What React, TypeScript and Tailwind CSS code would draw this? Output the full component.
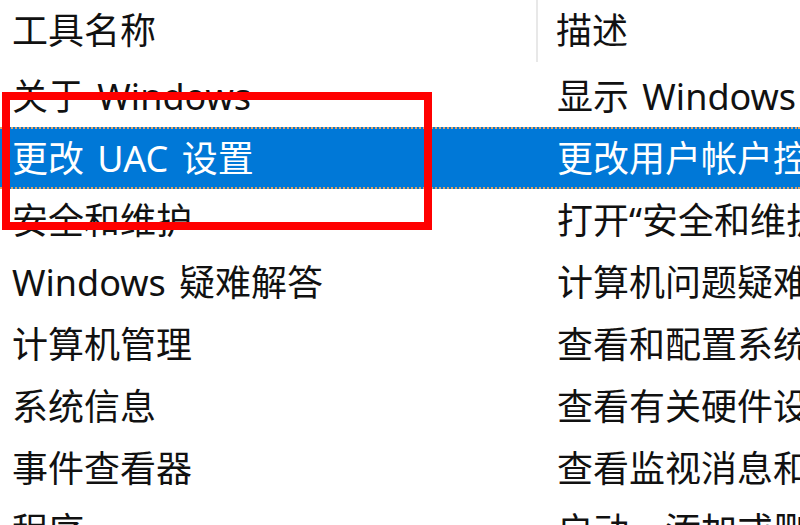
import React from "react";

type Tool = {
  name: string;
  desc: string;
};

const tools: Tool[] = [
  { name: "关于 Windows", desc: "显示 Windows 版本信息。" },
  { name: "更改 UAC 设置", desc: "更改用户帐户控制设置。" },
  { name: "安全和维护", desc: "打开“安全和维护”控制面板。" },
  { name: "Windows 疑难解答", desc: "计算机问题疑难解答。" },
  { name: "计算机管理", desc: "查看和配置系统设置和组件。" },
  { name: "系统信息", desc: "查看有关硬件设置和软件设置的高级信息。" },
  { name: "事件查看器", desc: "查看监视消息和疑难解答消息。" },
  { name: "程序", desc: "启动、添加或删除程序和 Windows 组件。" },
];

const selected = 1;

export default function App() {
  return (
    <div
      className="relative w-[800px] h-[525px] overflow-hidden bg-white text-[36px] text-[#111] whitespace-nowrap [word-spacing:4px]"
      style={{ fontFamily: '"Noto Sans", "Noto Sans CJK SC", sans-serif' }}
    >
      {/* column header */}
      <div className="flex h-[65px] items-start">
        <div className="w-[538px] h-[62px] flex items-center pl-3 border-r-2 border-[#e8e8e8] leading-none">
          工具名称
        </div>
        <div className="h-[62px] flex items-center pl-[18px] leading-none">描述</div>
      </div>

      {/* rows */}
      <div className="flex flex-col">
        {tools.map((t, i) => (
          <div
            key={i}
            className={
              i === selected
                ? "flex h-[62px] items-center bg-[#0078d7] text-white border-y-2 border-dotted border-[#e0a264] leading-none"
                : "flex h-[62px] items-center leading-none"
            }
          >
            <div className="w-[545px] pl-3 pt-[2px] shrink-0">{t.name}</div>
            <div className="pl-3 pt-[2px]">{t.desc}</div>
          </div>
        ))}
      </div>

      {/* red highlight box drawn over the list */}
      <div className="absolute left-[2px] top-[92px] w-[430px] h-[138px] border-[8px] border-[#ff0000]" />
    </div>
  );
}
